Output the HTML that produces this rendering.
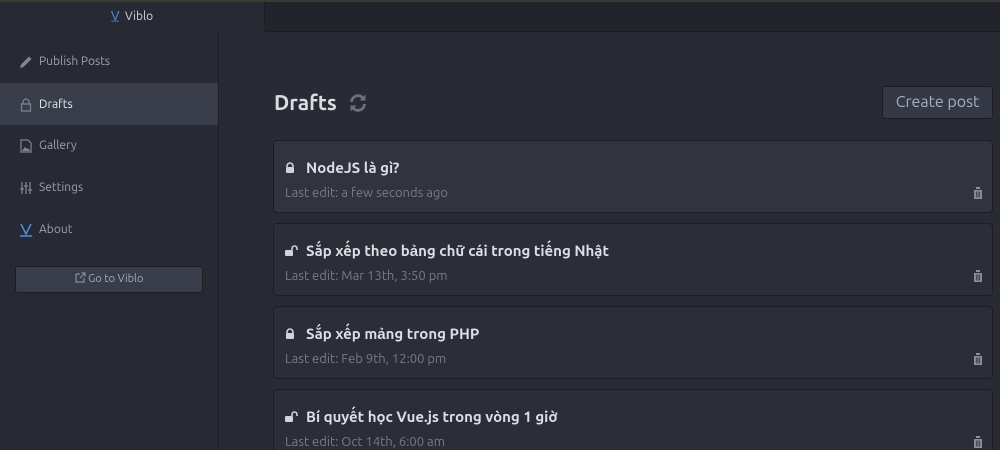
<!DOCTYPE html>
<html style="overflow:hidden;height:450px"><head><meta charset="utf-8"><style>
*{margin:0;padding:0;box-sizing:border-box}
body{width:1000px;height:450px;overflow:hidden;background:#282b34;font-family:"Ubuntu","Liberation Sans","Noto Sans CJK SC",sans-serif;color:#9aa0ab;position:relative}
.topline{position:absolute;left:0;top:0;width:1000px;height:2px;background:#3a3a33}
.hdrL{position:absolute;left:0;top:2px;width:265px;height:29px;background:#272a33;border-right:1px solid #1c1e24;text-align:center;font-size:12px;line-height:28px;color:#d0d4dc}
.hdrR{position:absolute;left:265px;top:2px;width:735px;height:30px;background:#21242b;border-bottom:1px solid #1a1c22}
.side{position:absolute;left:0;top:31px;width:219px;height:419px;background:#272a33;border-right:1px solid #1e2027}
.item{position:absolute;left:0;width:218px;height:42px;line-height:44px;padding-left:39px;font-size:12px;color:#9ca1ab}
.item.act{background:#393d49;color:#e8eaee}
.ic{position:absolute;left:19px;top:15px;width:14px;height:14px}
.btn{position:absolute;left:15px;top:235px;width:188px;height:27px;border:1px solid #1c1e24;border-radius:3px;background:#393d49;text-align:center;font-size:11px;line-height:25px;color:#a6abb5}
h1{position:absolute;left:274px;top:90px;font-size:21px;font-weight:bold;color:#d9dce2}
.cbtn{position:absolute;left:882px;top:86px;width:111px;height:33px;border:1px solid #1c1e24;border-radius:3px;background:#353945;font-size:16px;color:#a9aeb8;text-align:center;line-height:31px}
.card{position:absolute;left:273px;width:720px;height:73px;border:1px solid #1c1e24;border-radius:4px;background:#2b2e37}
.card.l{background:#31343e}
.card .t{position:absolute;left:32px;top:18px;font-size:15px;font-weight:bold;color:#dcdfe5}
.card .s{position:absolute;left:11px;top:45px;font-size:13px;color:#767b86}
.card svg.lk{position:absolute;left:10px;top:21px}
.card svg.tr{position:absolute;right:9px;top:46px}
</style></head><body>
<div class="topline"></div>
<div class="hdrL"><span style="color:#4f8fdc;font-size:13px">V̲</span>&nbsp; Viblo</div>
<div class="hdrR"></div>
<div class="side">
 <div class="item" style="top:9px"><svg class="ic" viewBox="0 0 14 14"><path d="M1 13l1-3.5 8-8 2.5 2.5-8 8z" fill="#80858f"/></svg>Publish Posts</div>
 <div class="item act" style="top:52px"><svg class="ic" viewBox="0 0 14 14"><path d="M4 6V4a3 3 0 016 0v2M2.5 6h9v7h-9z" fill="none" stroke="#80858f" stroke-width="1.2"/></svg>Drafts</div>
 <div class="item" style="top:93px"><svg class="ic" viewBox="0 0 14 14"><path d="M2 1h7l3 3v9H2z" fill="none" stroke="#80858f" stroke-width="1.2"/><path d="M3 12l3-4 2 2 1-1 2 3z" fill="#80858f"/></svg>Gallery</div>
 <div class="item" style="top:135px"><svg class="ic" viewBox="0 0 14 14"><path d="M3 1v12M7 1v12M11 1v12M1 8h4M5 5h4M9 9h4" stroke="#80858f" stroke-width="1.3"/></svg>Settings</div>
 <div class="item" style="top:177px"><svg class="ic" viewBox="0 0 14 14"><path d="M2 1l5 10 5-10" fill="none" stroke="#4f8fdc" stroke-width="1.5"/><path d="M1 13h12" stroke="#4f8fdc" stroke-width="1.5"/></svg>About</div>
 <div class="btn"><svg width="11" height="11" viewBox="0 0 11 11" style="vertical-align:-1px"><path d="M1 2h4M1 2v8h8V6" fill="none" stroke="#8a8f99" stroke-width="1.2"/><path d="M5 6l5-5M6.5 1H10v3.5" fill="none" stroke="#8a8f99" stroke-width="1.2"/></svg> Go to Viblo</div>
</div>
<h1>Drafts</h1>
<svg style="position:absolute;left:348px;top:93px" width="20" height="20" viewBox="0 0 20 20"><path d="M3.5 9A6.5 6.5 0 0 1 15 5" fill="none" stroke="#6c717b" stroke-width="2.8"/><path d="M17.5 1.5v6h-6z" fill="#6c717b"/><path d="M16.5 11A6.5 6.5 0 0 1 5 15" fill="none" stroke="#6c717b" stroke-width="2.8"/><path d="M2.5 18.5v-6h6z" fill="#6c717b"/></svg>
<div class="cbtn">Create post</div>

<div class="card l" style="top:140px"><svg class="lk" width="12" height="12" viewBox="0 0 12 12"><path d="M3 5V4a3 3 0 016 0v1" fill="none" stroke="#d0d3da" stroke-width="1.6"/><rect x="2" y="5" width="8" height="6" rx="1" fill="#d0d3da"/></svg><div class="t">NodeJS là gì?</div><div class="s">Last edit: a few seconds ago</div><svg class="tr" width="10" height="12" viewBox="0 0 10 12"><path d="M0 2h10M3 2V0h4v2M1 3h8v9H1z" fill="#8a8f99"/><path d="M3.3 4.5v6M5 4.5v6M6.7 4.5v6" stroke="#31343e" stroke-width=".8"/></svg></div>

<div class="card" style="top:223px"><svg class="lk" width="14" height="12" viewBox="0 0 14 12"><path d="M8 5V3.5a2.5 2.5 0 015 0V5" fill="none" stroke="#d0d3da" stroke-width="1.6"/><rect x="1" y="5" width="8" height="6" rx="1" fill="#d0d3da"/></svg><div class="t">Sắp xếp theo bảng chữ cái trong tiếng Nhật</div><div class="s">Last edit: Mar 13th, 3:50 pm</div><svg class="tr" width="10" height="12" viewBox="0 0 10 12"><path d="M0 2h10M3 2V0h4v2M1 3h8v9H1z" fill="#8a8f99"/><path d="M3.3 4.5v6M5 4.5v6M6.7 4.5v6" stroke="#2b2e37" stroke-width=".8"/></svg></div>

<div class="card" style="top:306px"><svg class="lk" width="12" height="12" viewBox="0 0 12 12"><path d="M3 5V4a3 3 0 016 0v1" fill="none" stroke="#d0d3da" stroke-width="1.6"/><rect x="2" y="5" width="8" height="6" rx="1" fill="#d0d3da"/></svg><div class="t">Sắp xếp mảng trong PHP</div><div class="s">Last edit: Feb 9th, 12:00 pm</div><svg class="tr" width="10" height="12" viewBox="0 0 10 12"><path d="M0 2h10M3 2V0h4v2M1 3h8v9H1z" fill="#8a8f99"/><path d="M3.3 4.5v6M5 4.5v6M6.7 4.5v6" stroke="#2b2e37" stroke-width=".8"/></svg></div>

<div class="card" style="top:389px"><svg class="lk" width="14" height="12" viewBox="0 0 14 12"><path d="M8 5V3.5a2.5 2.5 0 015 0V5" fill="none" stroke="#d0d3da" stroke-width="1.6"/><rect x="1" y="5" width="8" height="6" rx="1" fill="#d0d3da"/></svg><div class="t">Bí quyết học Vue.js trong vòng 1 giờ</div><div class="s">Last edit: Oct 14th, 6:00 am</div><svg class="tr" width="10" height="12" viewBox="0 0 10 12"><path d="M0 2h10M3 2V0h4v2M1 3h8v9H1z" fill="#8a8f99"/><path d="M3.3 4.5v6M5 4.5v6M6.7 4.5v6" stroke="#2b2e37" stroke-width=".8"/></svg></div>
</body></html>
